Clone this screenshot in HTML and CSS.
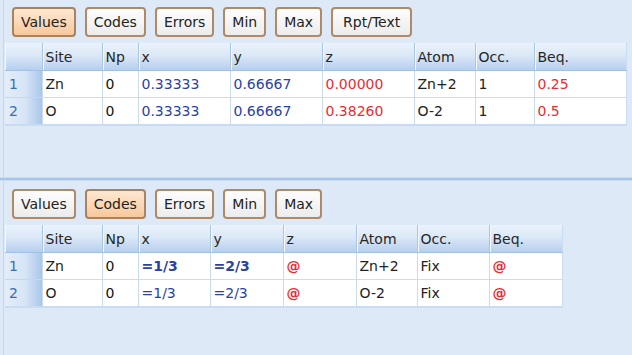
FILE: index.html
```html
<!DOCTYPE html>
<html lang="en">
<head>
    <meta charset="UTF-8">
    <meta name="viewport" content="width=device-width, initial-scale=1.0">
    <title>Sites</title>
    <link rel="stylesheet" href="styles.css">
</head>
<body>
    <div class="pane pane-top">
        <div class="toolbar">
            <span class="btn active">Values</span>
            <span class="btn">Codes</span>
            <span class="btn">Errors</span>
            <span class="btn">Min</span>
            <span class="btn">Max</span>
            <span class="btn btn-wide">Rpt/Text</span>
        </div>
        <table class="grid wide">
            <colgroup>
                <col class="c-rh"><col class="c-site"><col class="c-np"><col class="c-num"><col class="c-num">
                <col class="c-num"><col class="c-atom"><col class="c-occ"><col class="c-num">
            </colgroup>
            <tr class="head">
                <th></th><th>Site</th><th>Np</th><th>x</th><th>y</th><th>z</th><th>Atom</th><th>Occ.</th><th>Beq.</th>
            </tr>
            <tr>
                <td class="rh">1</td><td>Zn</td><td class="np">0</td>
                <td class="blue">0.33333</td><td class="blue">0.66667</td><td class="red">0.00000</td>
                <td>Zn+2</td><td>1</td><td class="red">0.25</td>
            </tr>
            <tr>
                <td class="rh">2</td><td>O</td><td class="np">0</td>
                <td class="blue">0.33333</td><td class="blue">0.66667</td><td class="red">0.38260</td>
                <td>O-2</td><td>1</td><td class="red">0.5</td>
            </tr>
        </table>
    </div>
    <div class="splitter"></div>
    <div class="pane pane-bottom">
        <div class="toolbar">
            <span class="btn">Values</span>
            <span class="btn active">Codes</span>
            <span class="btn">Errors</span>
            <span class="btn">Min</span>
            <span class="btn">Max</span>
        </div>
        <table class="grid narrow">
            <colgroup>
                <col class="c-rh"><col class="c-site"><col class="c-np"><col class="c-x"><col class="c-y">
                <col class="c-y"><col class="c-atom"><col class="c-occ2"><col class="c-y">
            </colgroup>
            <tr class="head">
                <th></th><th>Site</th><th>Np</th><th>x</th><th>y</th><th>z</th><th>Atom</th><th>Occ.</th><th>Beq.</th>
            </tr>
            <tr>
                <td class="rh">1</td><td>Zn</td><td class="np">0</td>
                <td class="blue b">=1/3</td><td class="blue b">=2/3</td><td class="red b">@</td>
                <td>Zn+2</td><td>Fix</td><td class="red b">@</td>
            </tr>
            <tr>
                <td class="rh">2</td><td>O</td><td class="np">0</td>
                <td class="blue">=1/3</td><td class="blue">=2/3</td><td class="red b">@</td>
                <td>O-2</td><td>Fix</td><td class="red b">@</td>
            </tr>
        </table>
    </div>
</body>
</html>
```

FILE: styles.css
```css
html, body{
    margin: 0;
    height: 100%;
}

body{
    background-color: #dde9f7;
    font-family: "DejaVu Sans", Verdana, sans-serif;
    font-size: 14px;
    color: #222;
    overflow: hidden;
}

.pane{
    margin-left: 3px;
    border-left: 1px solid #c4d7ef;
    padding-left: 1px;
}

.pane-top{
    height: 177px;
    padding-top: 7px;
    box-sizing: border-box;
}

.pane-bottom{
    height: 174px;
    padding-top: 8px;
    box-sizing: border-box;
}

.splitter{
    height: 2px;
    background-color: #a8c4e6;
    border-top: 1px solid #c9dcf2;
    border-bottom: 1px solid #c9dcf2;
}

.toolbar{
    display: flex;
    gap: 9px;
    padding-left: 7px;
    margin-bottom: 6px;
}

.btn{
    display: flex;
    align-items: center;
    height: 30px;
    box-sizing: border-box;
    padding: 0 7px 1px;
    border: 2px solid #b08a66;
    border-radius: 4px;
    background: linear-gradient(#fdfdfd, #ececec);
    color: #222;
}

.btn-wide{
    padding: 0 10px 1px;
}

.btn.active{
    background: linear-gradient(#fde8d2, #f8c89c);
    border-color: #a9825e;
}

.grid{
    border-collapse: collapse;
    table-layout: fixed;
    background-color: #fff;
    border-right: 1px solid #c9dcf2;
    border-bottom: 2px solid #c9dcf2;
}

.grid.wide{ width: 621px; }
.grid.narrow{ width: 557px; }

.c-rh{ width: 37px; }
.c-site{ width: 60px; }
.c-np{ width: 36px; }
.c-num{ width: 92px; }
.c-atom{ width: 61px; }
.c-occ{ width: 59px; }
.c-x{ width: 72px; }
.c-y{ width: 73px; }
.c-occ2{ width: 72px; }

.grid th, .grid td{
    padding: 0 0 0 3px;
    text-align: left;
    white-space: nowrap;
    overflow: hidden;
}

.grid th{
    height: 27px;
    font-weight: normal;
    color: #262626;
    background: linear-gradient(#eaf2fb, #dbe8f7 45%, #b6cfee);
    border-left: 1px solid #a9c5e8;
    box-shadow: inset 1px 0 #f4f8fd;
    border-bottom: 1px solid #a3c0e5;
}

.grid th:first-child{
    border-left: none;
}

.grid td{
    height: 26px;
    border-left: 1px solid #c9dcf2;
    border-top: 1px solid #c9dcf2;
}

.grid td.rh{
    padding-left: 4px;
    color: #3a6cb8;
    border-left: none;
    border-top: 1px solid #c3d7ef;
    background: linear-gradient(to right, #e3edf8, #d6e4f5 55%, #a9c6ea);
}

.grid td.np{ color: #111; }
.grid td.blue{ color: #2b41a6; }
.grid td.red{ color: #ef2a2e; }
.grid td.b{ font-weight: bold; }
```
